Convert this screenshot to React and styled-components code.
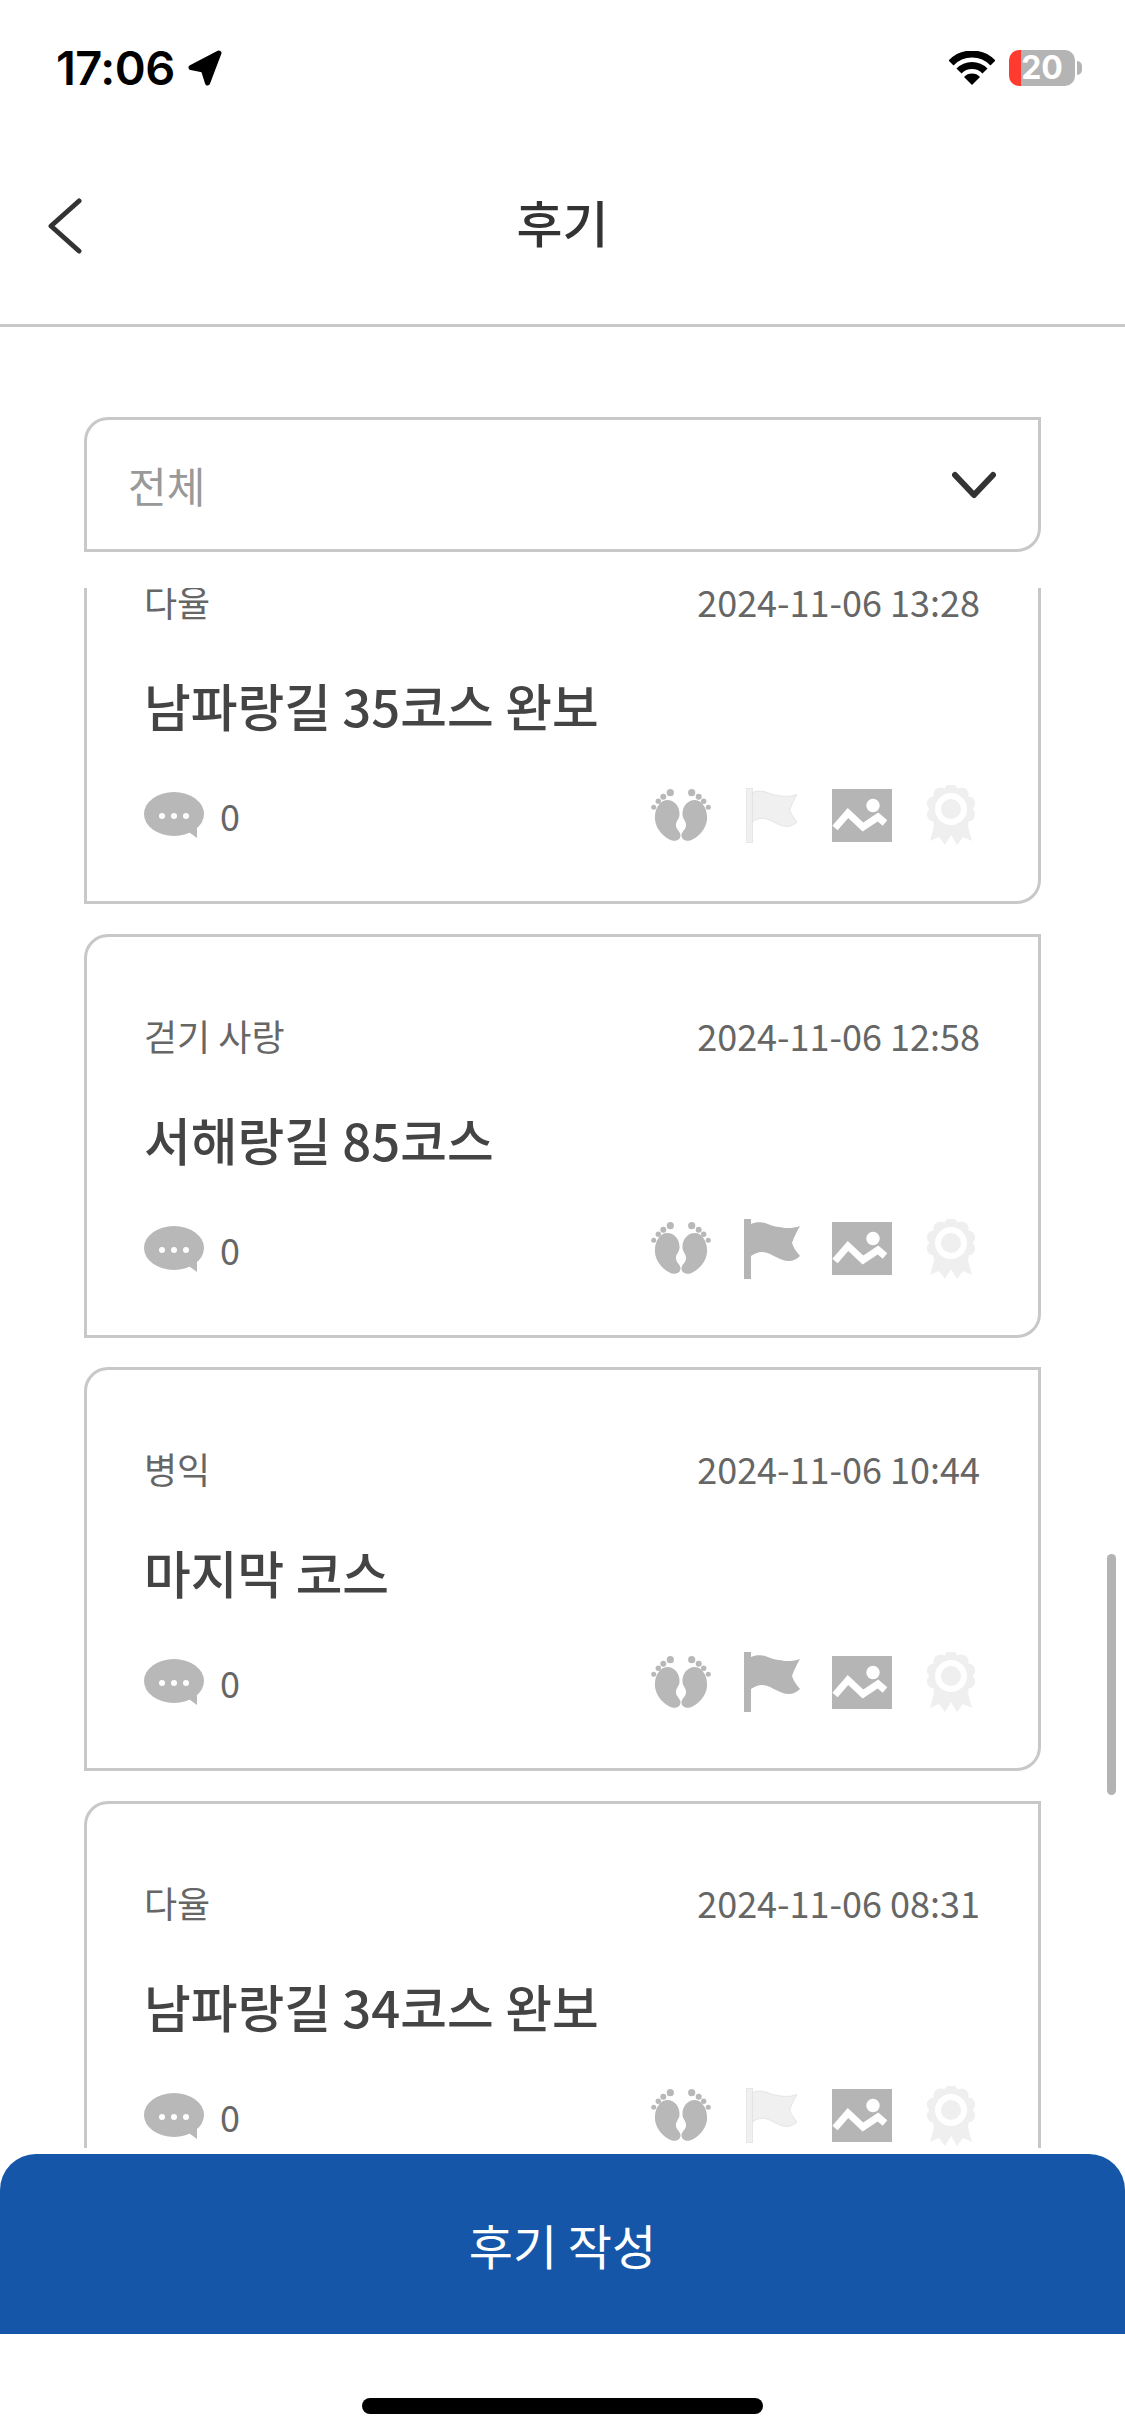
import React from "react";
import styled, { createGlobalStyle } from "styled-components";

const GlobalStyle = createGlobalStyle`
  html, body {
    margin: 0;
    padding: 0;
    background: #fff;
  }
  * {
    box-sizing: border-box;
  }
`;

const KR = `"Noto Sans CJK KR", "Noto Sans", sans-serif`;

const Screen = styled.div`
  position: relative;
  width: 1125px;
  height: 2436px;
  display: flex;
  flex-direction: column;
  overflow: hidden;
  background: #fff;
  font-family: ${KR};
`;

const StatusBar = styled.div`
  height: 100px;
  padding: 36px 50px 0 56px;
  display: flex;
  justify-content: space-between;
  align-items: center;
`;

const StatusGroup = styled.div`
  display: flex;
  align-items: center;
  gap: ${(p) => p.$gap}px;
`;

const Clock = styled.span`
  font-family: Inter, sans-serif;
  font-size: 47px;
  line-height: 48px;
  font-weight: 600;
  color: #000;
  letter-spacing: -0.5px;
`;

const Battery = styled.div`
  position: relative;
  width: 66px;
  height: 36px;
  border-radius: 10px;
  background: linear-gradient(90deg, #ff3b30 12px, #b4b4b4 12px);
  color: #fff;
  font-family: Inter, sans-serif;
  font-size: 32px;
  font-weight: 700;
  line-height: 36px;
  text-align: center;

  &::after {
    content: "";
    position: absolute;
    right: -7px;
    top: 11px;
    width: 5px;
    height: 14px;
    border-radius: 0 5px 5px 0;
    background: #b4b4b4;
  }
`;

const Header = styled.header`
  height: 227px;
  padding: 18px 48px 0;
  display: grid;
  grid-template-columns: 1fr auto 1fr;
  align-items: center;
  border-bottom: 3px solid #c8c8c8;
`;

const BackSlot = styled.div`
  display: flex;
  margin-top: 10px;
`;

const Title = styled.h1`
  margin: 0;
  font-size: 50px;
  font-weight: 500;
  line-height: 60px;
  color: #333;
`;

const FilterWrap = styled.div`
  padding: 90px 84px 36px;
`;

const Select = styled.div`
  height: 135px;
  padding: 0 42px 0 41px;
  display: flex;
  align-items: center;
  justify-content: space-between;
  border: 3px solid #c8c8c8;
  border-radius: 24px 0 24px 0;
  font-size: 42px;
  color: #999;
`;

const List = styled.div`
  height: 1560px;
  padding: 0 84px;
  overflow: hidden;
`;

const ListInner = styled.div`
  margin-top: -88px;
  display: flex;
  flex-direction: column;
  gap: 29.5px;
`;

const Card = styled.article`
  height: 404px;
  flex: none;
  padding: 71px 58px 0 57px;
  border: 3px solid #c8c8c8;
  border-radius: 24px 0 24px 0;
  background: #fff;
`;

const MetaRow = styled.div`
  display: flex;
  justify-content: space-between;
  align-items: center;
  height: 54px;
  font-size: 36px;
  line-height: 54px;
  color: #666;
`;

const CardTitle = styled.h2`
  margin: 45px 0 0;
  font-size: 50.8px;
  font-weight: 500;
  line-height: 64px;
  color: #444;
`;

const FooterRow = styled.div`
  margin-top: 48px;
  display: flex;
  justify-content: space-between;
  align-items: center;
  height: 60px;
`;

const CommentCount = styled.div`
  display: flex;
  align-items: center;
  gap: 16px;
  font-size: 36px;
  line-height: 44px;
  color: #666;
`;

const Badges = styled.div`
  display: flex;
  align-items: center;
  width: 326px;
  margin-right: 3px;
  justify-content: space-between;
`;

const Slot = styled.div`
  width: ${(p) => p.$w}px;
  display: flex;
  justify-content: center;
`;

const ScrollThumb = styled.div`
  position: absolute;
  left: 1107px;
  top: 1554px;
  width: 9px;
  height: 241px;
  border-radius: 5px;
  background: #b3b3b3;
`;

const WriteButton = styled.button`
  margin-top: 6px;
  height: 180px;
  width: 100%;
  border: 0;
  border-radius: 36px 36px 0 0;
  background: #1556a8;
  color: #fff;
  font-family: ${KR};
  font-size: 48px;
  font-weight: 400;
`;

const HomeArea = styled.div`
  flex: 1;
  padding-top: 64px;
  display: flex;
  justify-content: center;
  align-items: flex-start;
`;

const HomeBar = styled.div`
  width: 401px;
  height: 16px;
  border-radius: 8px;
  background: #000;
`;

const LocationArrow = () => (
  <svg width="36" height="36" viewBox="0 0 33 35">
    <path
      d="M30 3 L3 17 L15 19.5 L19 32 Z"
      fill="#000"
      stroke="#000"
      strokeWidth="5"
      strokeLinejoin="round"
    />
  </svg>
);

const Wifi = () => (
  <svg width="46" height="34" viewBox="0 0 46 34">
    <path d="M2 12 A29 29 0 0 1 44 12" fill="none" stroke="#000" strokeWidth="7" />
    <path d="M10 20 A18 18 0 0 1 36 20" fill="none" stroke="#000" strokeWidth="7" />
    <path d="M15 26 A11 11 0 0 1 31 26 L23 34 Z" fill="#000" />
  </svg>
);

const BackIcon = () => (
  <svg width="34" height="56" viewBox="0 0 34 56">
    <path
      d="M31 3 L3 28 L31 53"
      fill="none"
      stroke="#333"
      strokeWidth="5"
      strokeLinecap="round"
      strokeLinejoin="round"
    />
  </svg>
);

const ChevronDown = () => (
  <svg width="44" height="28" viewBox="0 0 44 28">
    <path
      d="M3 4 L22 24 L41 4"
      fill="none"
      stroke="#333"
      strokeWidth="6"
      strokeLinecap="round"
      strokeLinejoin="round"
    />
  </svg>
);

const CommentIcon = () => (
  <svg width="60" height="46" viewBox="0 0 60 46">
    <ellipse cx="30" cy="22" rx="30" ry="22" fill="#b8b8b8" />
    <path d="M42 38 L53 34 L53 46 Z" fill="#b8b8b8" />
    <circle cx="18" cy="24" r="3" fill="#fff" />
    <circle cx="30" cy="24" r="3" fill="#fff" />
    <circle cx="42" cy="24" r="3" fill="#fff" />
  </svg>
);

const FootPrints = () => {
  const foot = (
    <>
      <circle cx="19.3" cy="3.7" r="3.6" />
      <circle cx="12.3" cy="7.7" r="3" />
      <circle cx="7.3" cy="12.3" r="2.7" />
      <circle cx="2.7" cy="18.3" r="2.5" />
      <path d="M16 11 C24 11 29 18 28.5 26 C28 31 24.5 32 25 37 C25.5 41 30 43 29.5 47 C29 51 25 52.5 21 51.5 C13 49 5 40 4 31 C3 20 9 11 16 11 Z" />
    </>
  );
  return (
    <svg width="60" height="53" viewBox="0 0 60 53" fill="#b8b8b8">
      {foot}
      <g transform="translate(60 0) scale(-1 1)">{foot}</g>
    </svg>
  );
};

const Flag = ({ active }) => (
  <svg
    width={active ? 56 : 51}
    height={active ? 60 : 55}
    viewBox="0 0 56 60"
    fill={active ? "#b5b5b5" : "#f0f0f0"}
    stroke={active ? "none" : "#dedede"}
    strokeWidth="0.8"
  >
    <rect x="0" y="0" width="7" height="60" />
    <path d="M7 5 C11 3 15 3 18 3.5 C24 4 29 8 35 8 C40 9 48 10 56 7 C53 12 50 18 48 24 C50 30 53 33 56 37 C52 41 48 42 45 42 C40 42 36 40 32 38 C28 36 23 33 18 33 C14 33 10 35 7 37 Z" />
  </svg>
);

const PhotoIcon = () => (
  <svg width="60" height="53" viewBox="0 0 60 53">
    <rect width="60" height="53" fill="#b5b5b5" />
    <circle cx="41" cy="16.5" r="6.7" fill="#fff" />
    <path
      d="M3 39 L16 24 L31 38 L46 28 L53 34"
      fill="none"
      stroke="#fff"
      strokeWidth="7"
    />
  </svg>
);

const RosetteIcon = () => {
  const bumps = Array.from({ length: 10 }, (_, i) => {
    const a = (i / 10) * Math.PI * 2;
    return { x: 26 + Math.sin(a) * 18, y: 24 - Math.cos(a) * 18 };
  });
  return (
    <svg width="52" height="60" viewBox="0 0 52 60" fill="#efefef">
      <polygon points="10,38 5,56 14,52 20,60 26,50 32,60 38,52 47,56 42,38" />
      <circle cx="26" cy="24" r="20" />
      {bumps.map((b, i) => (
        <circle key={i} cx={b.x} cy={b.y} r="7" />
      ))}
      <circle cx="26" cy="24" r="16" fill="#fff" />
      <circle cx="26" cy="24" r="10" />
    </svg>
  );
};

const reviews = [
  { id: 1, author: "다율", date: "2024-11-06 13:28", title: "남파랑길 35코스 완보", flag: false },
  { id: 2, author: "걷기 사랑", date: "2024-11-06 12:58", title: "서해랑길 85코스", flag: true },
  { id: 3, author: "병익", date: "2024-11-06 10:44", title: "마지막 코스", flag: true },
  { id: 4, author: "다율", date: "2024-11-06 08:31", title: "남파랑길 34코스 완보", flag: false },
];

export default function App() {
  return (
    <Screen>
      <GlobalStyle />
      <StatusBar>
        <StatusGroup $gap={12}>
          <Clock>17:06</Clock>
          <LocationArrow />
        </StatusGroup>
        <StatusGroup $gap={14}>
          <Wifi />
          <Battery>20</Battery>
        </StatusGroup>
      </StatusBar>

      <Header>
        <BackSlot>
          <BackIcon />
        </BackSlot>
        <Title>후기</Title>
      </Header>

      <FilterWrap>
        <Select>
          전체
          <ChevronDown />
        </Select>
      </FilterWrap>

      <List>
        <ListInner>
          {reviews.map((r) => (
            <Card key={r.id}>
              <MetaRow>
                <span>{r.author}</span>
                <span>{r.date}</span>
              </MetaRow>
              <CardTitle>{r.title}</CardTitle>
              <FooterRow>
                <CommentCount>
                  <CommentIcon />0
                </CommentCount>
                <Badges>
                  <Slot $w={60}>
                    <FootPrints />
                  </Slot>
                  <Slot $w={56}>
                    <Flag active={r.flag} />
                  </Slot>
                  <Slot $w={60}>
                    <PhotoIcon />
                  </Slot>
                  <Slot $w={52}>
                    <RosetteIcon />
                  </Slot>
                </Badges>
              </FooterRow>
            </Card>
          ))}
        </ListInner>
      </List>

      <WriteButton>후기 작성</WriteButton>
      <HomeArea>
        <HomeBar />
      </HomeArea>
      <ScrollThumb />
    </Screen>
  );
}
